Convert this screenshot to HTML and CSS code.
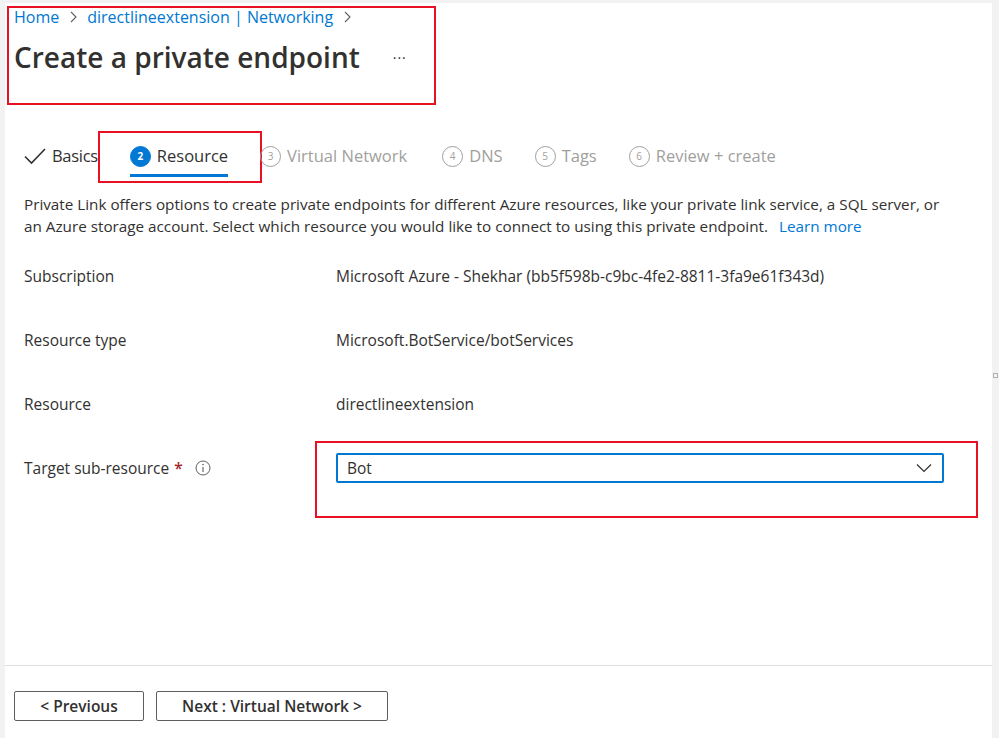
FILE: index.html
```html
<!DOCTYPE html>
<html lang="en">
<head>
    <meta charset="UTF-8">
    <title>Create a private endpoint</title>
    <link rel="stylesheet" href="styles.css">
</head>
<body>
    <div class="blade">
        <div class="header mark">
            <nav class="breadcrumb">
                <a href="#">Home</a>
                <svg class="crumb-sep" width="8" height="12" viewBox="0 0 8 12"><path d="M2 1 L7 6 L2 11" fill="none" stroke="#605e5c" stroke-width="1.1"/></svg>
                <a href="#">directlineextension | Networking</a>
                <svg class="crumb-sep" width="8" height="12" viewBox="0 0 8 12"><path d="M2 1 L7 6 L2 11" fill="none" stroke="#605e5c" stroke-width="1.1"/></svg>
            </nav>
            <div class="title-row">
                <h1>Create a private endpoint</h1>
                <span class="more">&middot;&middot;&middot;</span>
            </div>
        </div>

        <div class="tabs">
            <div class="tab done">
                <svg class="check" width="22" height="18" viewBox="0 0 22 18"><path d="M1 9.5 L7.5 16 L21 2" fill="none" stroke="#323130" stroke-width="1.6"/></svg>
                <span>Basics</span>
            </div>
            <div class="tab active">
                <span class="step">2</span>
                <span>Resource</span>
                <div class="mark-box tab-mark"></div>
            </div>
            <div class="tab">
                <span class="step">3</span>
                <span>Virtual Network</span>
            </div>
            <div class="tab dns">
                <span class="step">4</span>
                <span>DNS</span>
            </div>
            <div class="tab">
                <span class="step">5</span>
                <span>Tags</span>
            </div>
            <div class="tab">
                <span class="step">6</span>
                <span>Review + create</span>
            </div>
        </div>

        <p class="intro">Private Link offers options to create private endpoints for different Azure resources, like your private link service, a SQL server, or<br>an Azure storage account. Select which resource you would like to connect to using this private endpoint.<a class="learn" href="#">Learn more</a></p>

        <div class="fields">
            <div class="field">
                <div class="label">Subscription</div>
                <div class="value">Microsoft Azure - Shekhar (bb5f598b-c9bc-4fe2-8811-3fa9e61f343d)</div>
            </div>
            <div class="field">
                <div class="label">Resource type</div>
                <div class="value">Microsoft.BotService/botServices</div>
            </div>
            <div class="field">
                <div class="label">Resource</div>
                <div class="value">directlineextension</div>
            </div>
            <div class="field">
                <div class="label">
                    Target sub-resource <span class="required">*</span>
                    <svg class="info" width="16" height="16" viewBox="0 0 16 16"><circle cx="8" cy="8" r="7" fill="none" stroke="#605e5c" stroke-width="1"/><path d="M8 7 V12" stroke="#605e5c" stroke-width="1.1"/><circle cx="8" cy="4.6" r="0.8" fill="#605e5c"/></svg>
                </div>
                <div class="value">
                    <div class="dropdown">
                        <span>Bot</span>
                        <svg width="16" height="10" viewBox="0 0 16 10"><path d="M1 1.5 L8 8.5 L15 1.5" fill="none" stroke="#323130" stroke-width="1.2"/></svg>
                        <div class="mark-box drop-mark"></div>
                    </div>
                </div>
            </div>
        </div>

        <div class="footer">
            <button class="btn prev">&lt; Previous</button>
            <button class="btn next">Next : Virtual Network &gt;</button>
        </div>
    </div>
    <div class="scroll-nub"></div>
</body>
</html>
```

FILE: styles.css
```css
body {
    margin: 0;
    background: #f2f2f2;
    font-family: 'Open Sans', 'Noto Sans', sans-serif;
    color: #323130;
    height: 738px;
    overflow: hidden;
}

a {
    color: #0078d4;
    text-decoration: none;
}

.blade {
    display: flow-root;
    margin: 3px 0 0 5px;
    width: 987px;
    height: 735px;
    background: white;
}

.mark {
    border: 2px solid #e81123;
}

.mark-box {
    position: absolute;
    border: 2px solid #e81123;
    pointer-events: none;
}

.header {
    margin: 3px 0 0 2px;
    width: 420px;
    height: 95px;
    padding-left: 5px;
    box-sizing: content-box;
}

.breadcrumb {
    display: flex;
    align-items: center;
    gap: 10px;
    font-size: 16px;
    line-height: 18px;
}

.title-row {
    display: flex;
    align-items: center;
    margin-top: 13px;
}

h1 {
    margin: 0;
    font-size: 28px;
    font-weight: 600;
    line-height: 36px;
    color: #323130;
}

.more {
    margin-left: 33px;
    font-size: 14px;
    letter-spacing: 1px;
}

.tabs {
    display: flex;
    gap: 32px;
    margin: 40px 0 0 19px;
    font-size: 16.5px;
    line-height: 22px;
}

.tab {
    position: relative;
    display: flex;
    align-items: center;
    gap: 6px;
    padding-bottom: 7px;
    border-bottom: 3px solid transparent;
    color: #a19f9d;
}

.tab.dns {
    margin-left: 3px;
}

.tab.done {
    color: #323130;
    letter-spacing: -0.3px;
}

.tab.active {
    color: #323130;
    border-bottom-color: #0078d4;
}

.step {
    width: 19px;
    height: 19px;
    border: 1px solid #a19f9d;
    border-radius: 50%;
    font-size: 10px;
    line-height: 19px;
    text-align: center;
    letter-spacing: 0;
}

.active .step {
    background: #0078d4;
    border-color: #0078d4;
    color: white;
    font-weight: 700;
}

.tab-mark {
    left: -32px;
    top: -14px;
    width: 160px;
    height: 48px;
}

.intro {
    margin: 16px 0 0 19px;
    font-size: 15.25px;
    line-height: 22px;
    white-space: nowrap;
}

.learn {
    margin-left: 11px;
}

.fields {
    margin: 7px 0 0 19px;
}

.field {
    display: grid;
    grid-template-columns: 312px 608px;
    align-items: center;
    height: 64px;
    font-size: 15.5px;
}

.label {
    display: flex;
    align-items: center;
}

.required {
    color: #a4262c;
    margin-left: 5px;
    font-weight: 600;
}

.info {
    margin-left: 12px;
}

.dropdown {
    position: relative;
    display: flex;
    align-items: center;
    justify-content: space-between;
    height: 26px;
    padding: 0 10px 0 9px;
    border: 2px solid #0078d4;
    border-radius: 2px;
}

.drop-mark {
    left: -23px;
    top: -14px;
    width: 659px;
    height: 73px;
}

.footer {
    margin-top: 165px;
    border-top: 1px solid #e1dfdd;
    padding: 25px 0 0 9px;
    display: flex;
    gap: 12px;
}

.btn {
    height: 30px;
    background: white;
    border: 1px solid #605e5c;
    border-radius: 2px;
    font-family: inherit;
    font-size: 15.5px;
    font-weight: 600;
    color: #323130;
}

.prev {
    width: 130px;
}

.next {
    width: 232px;
}

.scroll-nub {
    position: absolute;
    left: 993px;
    top: 373px;
    width: 3px;
    height: 3px;
    border: 1px solid #b0b0b0;
}
```
